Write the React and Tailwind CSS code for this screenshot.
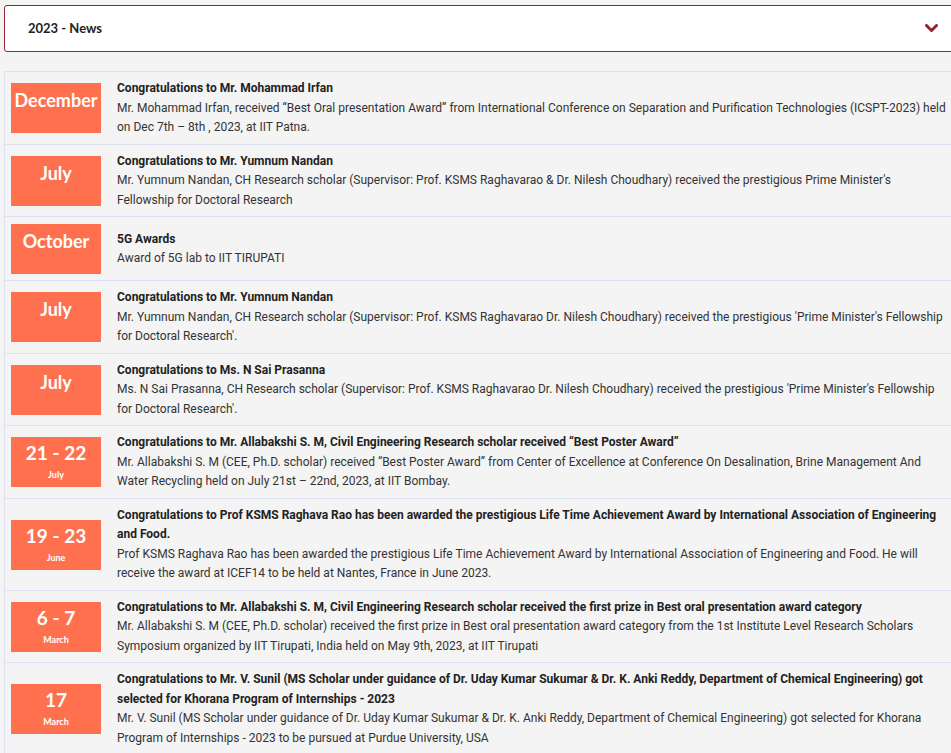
import React from "react";

const items = [
  {
    date: { type: "month", text: "December" },
    title: "Congratulations to Mr. Mohammad Irfan",
    body: "Mr. Mohammad Irfan, received “Best Oral presentation Award” from International Conference on Separation and Purification Technologies (ICSPT-2023) held on Dec 7th – 8th , 2023, at IIT Patna.",
  },
  {
    date: { type: "month", text: "July" },
    title: "Congratulations to Mr. Yumnum Nandan",
    body: "Mr. Yumnum Nandan, CH Research scholar (Supervisor: Prof. KSMS Raghavarao & Dr. Nilesh Choudhary) received the prestigious Prime Minister's Fellowship for Doctoral Research",
  },
  {
    date: { type: "month", text: "October" },
    title: "5G Awards",
    body: "Award of 5G lab to IIT TIRUPATI",
  },
  {
    date: { type: "month", text: "July" },
    title: "Congratulations to Mr. Yumnum Nandan",
    body: "Mr. Yumnum Nandan, CH Research scholar (Supervisor: Prof. KSMS Raghavarao Dr. Nilesh Choudhary) received the prestigious 'Prime Minister's Fellowship for Doctoral Research'.",
  },
  {
    date: { type: "month", text: "July" },
    title: "Congratulations to Ms. N Sai Prasanna",
    body: "Ms. N Sai Prasanna, CH Research scholar (Supervisor: Prof. KSMS Raghavarao Dr. Nilesh Choudhary) received the prestigious 'Prime Minister's Fellowship for Doctoral Research'.",
  },
  {
    date: { type: "day", text: "21 - 22", sub: "July" },
    title: "Congratulations to Mr. Allabakshi S. M, Civil Engineering Research scholar received “Best Poster Award”",
    body: "Mr. Allabakshi S. M (CEE, Ph.D. scholar) received “Best Poster Award” from Center of Excellence at Conference On Desalination, Brine Management And Water Recycling held on July 21st – 22nd, 2023, at IIT Bombay.",
  },
  {
    date: { type: "day", text: "19 - 23", sub: "June" },
    title: "Congratulations to Prof KSMS Raghava Rao has been awarded the prestigious Life Time Achievement Award by International Association of Engineering and Food.",
    body: "Prof KSMS Raghava Rao has been awarded the prestigious Life Time Achievement Award by International Association of Engineering and Food. He will receive the award at ICEF14 to be held at Nantes, France in June 2023.",
  },
  {
    date: { type: "day", text: "6 - 7", sub: "March" },
    title: "Congratulations to Mr. Allabakshi S. M, Civil Engineering Research scholar received the first prize in Best oral presentation award category",
    body: "Mr. Allabakshi S. M (CEE, Ph.D. scholar) received the first prize in Best oral presentation award category from the 1st Institute Level Research Scholars Symposium organized by IIT Tirupati, India held on May 9th, 2023, at IIT Tirupati",
  },
  {
    date: { type: "day", text: "17", sub: "March" },
    title: "Congratulations to Mr. V. Sunil (MS Scholar under guidance of Dr. Uday Kumar Sukumar & Dr. K. Anki Reddy, Department of Chemical Engineering) got selected for Khorana Program of Internships - 2023",
    body: "Mr. V. Sunil (MS Scholar under guidance of Dr. Uday Kumar Sukumar & Dr. K. Anki Reddy, Department of Chemical Engineering) got selected for Khorana Program of Internships - 2023 to be pursued at Purdue University, USA",
  },
];

function DateBox({ date }) {
  return (
    <div className="w-[90px] h-[50px] shrink-0 bg-[#ff714e] text-white flex flex-col items-center justify-center font-['Lato',sans-serif] font-bold">
      {date.type === "month" ? (
        <div className="text-[18px] leading-none -mt-[16px]">{date.text}</div>
      ) : (
        <>
          <div className="text-[19px] leading-none -mt-[2px]">{date.text}</div>
          <div className="text-[9px] leading-none mt-[8px]">{date.sub}</div>
        </>
      )}
    </div>
  );
}

export default function App() {
  return (
    <div className="w-[951px] h-[753px] overflow-hidden bg-[#f4f4f4] font-['Roboto',sans-serif]">
      <div className="w-[970px] pt-[5px] pl-[4px]">
        <div className="h-[47px] bg-white border border-[#9a2230] rounded-[3px] flex items-center justify-between pl-[23px] pr-[31px]">
          <span className="font-['Lato',sans-serif] font-bold text-[13px] text-[#222] mt-[1px]">2023 - News</span>
          <svg width="13" height="9" viewBox="0 0 13 9">
            <path d="M1.5 1.5 L6.5 6.5 L11.5 1.5" fill="none" stroke="#9a2230" strokeWidth="3" strokeLinecap="round" strokeLinejoin="round" />
          </svg>
        </div>
        <div className="mt-[19px] border-t border-l border-[#dde1f1]">
          {items.map((it, i) => (
            <div key={i} className="flex items-center border-b border-[#dde1f1] pl-[6px] pt-[7px] pb-[6px]">
              <DateBox date={it.date} />
              <div className="ml-[16px] w-[831px] text-[12px] leading-[19.5px] text-[#333]">
                <div className="font-bold text-[#222]">{it.title}</div>
                <div>{it.body}</div>
              </div>
            </div>
          ))}
        </div>
      </div>
    </div>
  );
}
